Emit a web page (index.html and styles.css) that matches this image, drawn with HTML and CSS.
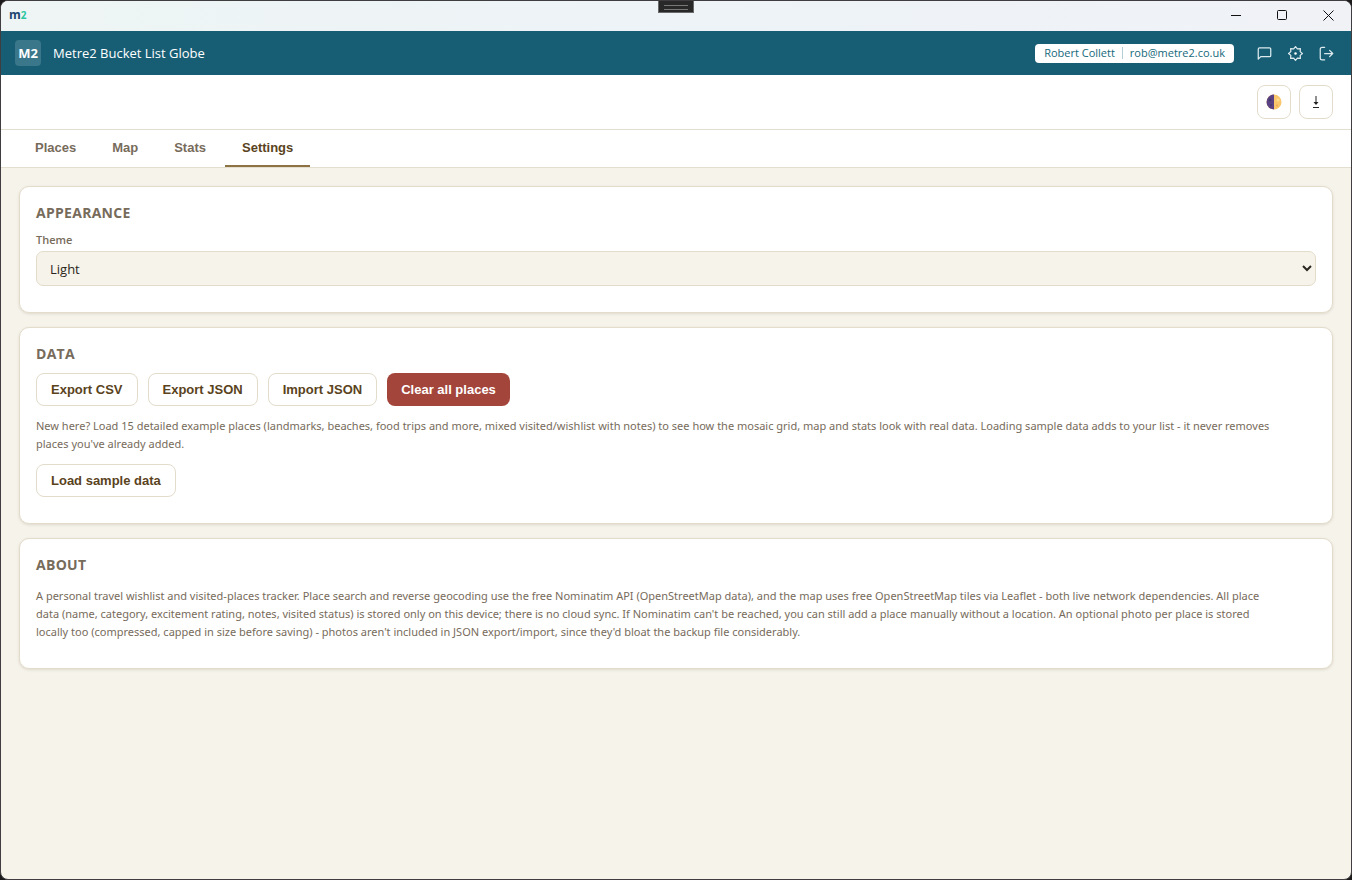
FILE: index.html
```html
<!DOCTYPE html>
<html lang="en">
<head>
    <meta charset="UTF-8">
    <meta name="viewport" content="width=device-width, initial-scale=1.0">
    <title>Metre2 Bucket List Globe</title>
    <link rel="stylesheet" href="styles.css">
</head>
<body>
    <div class="window">
        <!-- Window title bar -->
        <div class="titlebar">
            <div class="app-icon">m<span>2</span></div>
            <div class="drag-handle"></div>
            <div class="window-controls">
                <button aria-label="Minimise"><svg width="11" height="11" viewBox="0 0 11 11"><path d="M0 5.5h10"/></svg></button>
                <button aria-label="Maximise"><svg width="11" height="11" viewBox="0 0 11 11"><rect x="0.5" y="0.5" width="9" height="9" rx="1"/></svg></button>
                <button aria-label="Close"><svg width="11" height="11" viewBox="0 0 11 11"><path d="M0.5 0.5l10 10M10.5 0.5l-10 10"/></svg></button>
            </div>
        </div>

        <!-- Brand header -->
        <header class="header">
            <div class="logo">M2</div>
            <h1>Metre2 Bucket List Globe</h1>
            <div class="user">
                <span>Robert Collett</span>
                <span class="user-email">rob@metre2.co.uk</span>
            </div>
            <div class="header-actions">
                <button aria-label="Feedback">
                    <svg width="15" height="15" viewBox="0 0 24 24"><path d="M22 15a2 2 0 0 1-2 2H6l-4 4V5a2 2 0 0 1 2-2h16a2 2 0 0 1 2 2z"/></svg>
                </button>
                <button aria-label="Settings">
                    <svg width="15" height="15" viewBox="0 0 24 24"><path d="M12 1l3 3.5 4.800-.3-.3 4.800L23 12l-3.500 3 .3 4.800-4.800-.3L12 23l-3-3.500-4.800.3.3-4.800L1 12l3.500-3-.3-4.800 4.800.3z"/><circle class="dot" cx="12" cy="12" r="2"/></svg>
                </button>
                <button aria-label="Sign out">
                    <svg width="15" height="15" viewBox="0 0 24 24"><path d="M9 22H5a3 3 0 0 1-3-3V5a3 3 0 0 1 3-3h4M17 17l5-5-5-5M22 12H9"/></svg>
                </button>
            </div>
        </header>

        <!-- Toolbar -->
        <div class="toolbar">
            <button class="icon-btn" aria-label="Toggle theme">
                <svg width="16" height="16" viewBox="0 0 16 16">
                    <circle cx="8" cy="8" r="7.5" fill="#f9c66b"/>
                    <path d="M8 0.5a7.5 7.5 0 0 0 0 15z" fill="#5a4184"/>
                    <circle cx="4" cy="6" r="1.5" fill="#433b6b"/>
                    <circle cx="5" cy="11" r="1" fill="#433b6b"/>
                    <circle cx="12" cy="6" r="1.5" fill="#ffdc8c"/>
                    <circle cx="11" cy="11.5" r="1" fill="#eda957"/>
                </svg>
            </button>
            <button class="icon-btn" aria-label="Download">
                <svg width="8" height="12" viewBox="0 0 8 12"><path d="M4 0v8M1 11.5h6" stroke="#222" fill="none"/><path d="M1.5 6h5L4 9z" fill="#222"/></svg>
            </button>
        </div>

        <nav class="tabs">
            <button>Places</button>
            <button>Map</button>
            <button>Stats</button>
            <button class="active">Settings</button>
        </nav>

        <main class="content">
            <section class="card">
                <h2>Appearance</h2>
                <label for="theme">Theme</label>
                <select id="theme">
                    <option>Light</option>
                    <option>Dark</option>
                </select>
            </section>

            <section class="card">
                <h2>Data</h2>
                <div class="btn-row">
                    <button class="btn">Export CSV</button>
                    <button class="btn">Export JSON</button>
                    <button class="btn">Import JSON</button>
                    <button class="btn danger">Clear all places</button>
                </div>
                <p>New here? Load 15 detailed example places (landmarks, beaches, food trips and more, mixed visited/wishlist with notes) to see how the mosaic grid, map and stats look with real data. Loading sample data adds to your list - it never removes places you've already added.</p>
                <div class="btn-row">
                    <button class="btn">Load sample data</button>
                </div>
            </section>

            <section class="card about">
                <h2>About</h2>
                <p>A personal travel wishlist and visited-places tracker. Place search and reverse geocoding use the free Nominatim API (OpenStreetMap data), and the map uses free OpenStreetMap tiles via Leaflet - both live network dependencies. All place data (name, category, excitement rating, notes, visited status) is stored only on this device; there is no cloud sync. If Nominatim can't be reached, you can still add a place manually without a location. An optional photo per place is stored locally too (compressed, capped in size before saving) - photos aren't included in JSON export/import, since they'd bloat the backup file considerably.</p>
            </section>
        </main>
    </div>
</body>
</html>
```
FILE: styles.css
```css
* {
    box-sizing: border-box;
}
body {
    margin: 0;
    background: #1c1a1b;
    font-family: "Segoe UI", "Open Sans", sans-serif;
    font-size: 12px;
    color: #2a2620;
}
button {
    padding: 0;
    border: none;
    background: none;
    font-family: Arial, "Liberation Sans", sans-serif;
    cursor: pointer;
}
svg {
    display: block;
}
.window {
    min-height: 100vh;
    border: 1px solid #3f3d3f;
    border-radius: 8px;
    overflow: hidden;
    background: #f6f3eb;
}

/* Title bar */
.titlebar {
    position: relative;
    display: flex;
    justify-content: space-between;
    align-items: center;
    height: 30px;
    padding: 0 17px 2px 8px;
    background: linear-gradient(90deg, #eef5f4, #edf3f7 50%, #f0f2f6);
}
.app-icon {
    font-size: 12px;
    font-weight: 700;
    line-height: 26px;
    color: #1d4470;
}
.app-icon span {
    font-size: 10px;
    color: #2cc5a0;
}
.drag-handle {
    position: absolute;
    top: -1px;
    left: 50%;
    width: 36px;
    height: 13px;
    margin-left: -18px;
    padding: 4px 5px;
    border: 1px solid #696969;
    background: #282828;
}
.drag-handle::before {
    content: "";
    display: block;
    height: 3px;
    border: solid #777;
    border-width: 1px 0;
}
.window-controls {
    display: flex;
    gap: 35px;
}
.window-controls svg {
    fill: none;
    stroke: #111;
}

/* Header */
.header {
    display: flex;
    align-items: center;
    height: 44px;
    padding: 0 17px 0 14px;
    background: #175e75;
    color: #fff;
}
.logo {
    width: 26px;
    height: 26px;
    border-radius: 4px;
    background: #3a778a;
    font-size: 13px;
    font-weight: 700;
    line-height: 26px;
    text-align: center;
}
.header h1 {
    flex: 1;
    margin: 0 0 0 12px;
    font-size: 13px;
    font-weight: 500;
}
.user {
    display: flex;
    align-items: center;
    height: 19px;
    padding: 0 9px;
    border-radius: 4px;
    background: #fff;
    color: #14697a;
    font-size: 11px;
    line-height: 12px;
}
.user-email {
    margin-left: 7px;
    padding-left: 7px;
    border-left: 1px solid #b4ced5;
}
.header-actions {
    display: flex;
    gap: 16px;
    margin-left: 23px;
}
.header-actions svg {
    fill: none;
    stroke: #dceaee;
    stroke-width: 2;
    stroke-linecap: round;
    stroke-linejoin: round;
}
.header-actions .dot {
    fill: #fff;
    stroke: none;
}

/* Toolbar and tabs */
.toolbar {
    display: flex;
    justify-content: flex-end;
    gap: 8px;
    padding: 10px 18px;
    border-bottom: 1px solid #e3decf;
    background: #fff;
}
.icon-btn {
    display: flex;
    justify-content: center;
    align-items: center;
    width: 34px;
    height: 34px;
    border: 1px solid #e3dccb;
    border-radius: 8px;
    background: #fff;
}
.tabs {
    display: flex;
    gap: 2px;
    height: 38px;
    padding: 0 17px;
    border-bottom: 1px solid #e3decf;
    background: #fff;
}
.tabs button {
    padding: 0 17px;
    border-bottom: 2px solid transparent;
    font-size: 13px;
    font-weight: 700;
    color: #776b5b;
}
.tabs .active {
    border-color: #8d7243;
    color: #5a431d;
}

/* Settings cards */
.content {
    display: flex;
    flex-direction: column;
    gap: 14px;
    padding: 18px;
}
.card {
    padding: 16px 16px 26px;
    border: 1px solid #e3dccb;
    border-radius: 10px;
    background: #fff;
    box-shadow: 0 1px 3px rgba(80, 65, 30, 0.14);
    color: #776b5b;
}
.card h2 {
    margin: 0 0 10px;
    font-size: 14px;
    line-height: 19px;
    font-weight: 700;
    letter-spacing: 0.02em;
    text-transform: uppercase;
}
.card label {
    display: block;
    margin-bottom: 3px;
    font-size: 11px;
    font-weight: 600;
    line-height: 16px;
}
.card select {
    display: block;
    width: 100%;
    height: 35px;
    padding: 0 9px;
    border: 1px solid #e3dccb;
    border-radius: 7px;
    background: #f6f3eb;
    color: #2a2620;
    font-family: inherit;
    font-size: 13px;
}
.card p {
    margin: 11px 0;
    padding-right: 38px;
    font-family: "Segoe UI", "Noto Sans", sans-serif;
    font-size: 11px;
    line-height: 18px;
}
.about p {
    margin: 13px 0 1px;
}
.btn-row {
    display: flex;
    gap: 10px;
}
.btn {
    height: 33px;
    padding: 0 14px;
    border: 1px solid #e3dccb;
    border-radius: 8px;
    background: #fff;
    color: #5a431d;
    font-size: 13px;
    font-weight: 700;
}
.btn.danger {
    border: none;
    background: #a3453a;
    color: #fff;
}
```
